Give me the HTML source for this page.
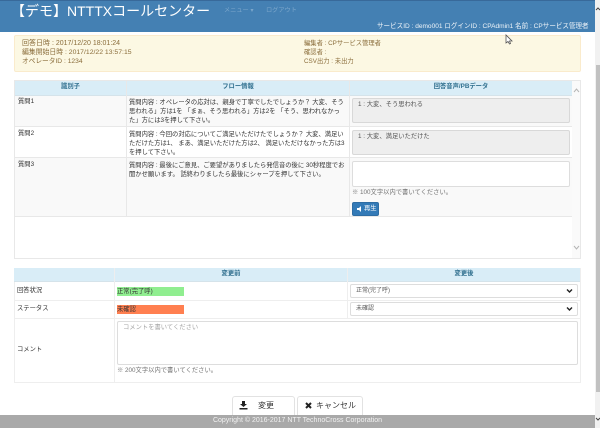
<!DOCTYPE html>
<html lang="ja"><head><meta charset="utf-8"><title>NTTTX</title>
<style>
html,body{margin:0;padding:0;background:#fff;}
body{width:600px;height:428px;position:relative;overflow:hidden;font-family:"Liberation Sans","Noto Sans CJK JP",sans-serif;font-size:6.3px;color:#333;}
.a{position:absolute;box-sizing:border-box;}
.t{position:absolute;white-space:nowrap;line-height:10px;}
.c{text-align:center;}
.th{color:#31708f;font-weight:bold;}
.box{background:#f9f9f9;}
.ta{font-size:6.3px;line-height:9.2px;white-space:nowrap;position:absolute;}
.in{position:absolute;box-sizing:border-box;border:1px solid #ddd;border-radius:2px;}
.al{color:#8a6d3b;}
</style></head><body>

<!-- header -->
<div class="a" style="left:0;top:0;width:595px;height:32px;background:#4480b3;border-top:1px solid #38699a;"></div>
<div class="t" style="left:11px;top:2px;font-size:14px;line-height:18px;color:#fff;">【デモ】NTTTXコールセンター</div>
<div class="t" style="left:224px;top:6px;color:#7ba6cb;font-size:6.2px;">メニュー ▾</div>
<div class="t" style="left:266px;top:6px;color:#7ba6cb;font-size:6.2px;">ログアウト</div>
<div class="t" style="left:377px;top:22px;color:#eef3f8;font-size:6.55px;">サービスID : demo001 ログインID : CPAdmin1 名前 : CPサービス管理者</div>

<!-- scrollbar -->
<div class="a" style="left:595px;top:0;width:5px;height:428px;background:#f1f1f1;"></div>
<div class="a" style="left:596px;top:65px;width:4px;height:327px;background:#c1c1c1;"></div>
<svg class="a" style="left:595px;top:6px" width="5" height="6"><path d="M1 4L3 2L5 4" fill="none" stroke="#444" stroke-width="1"/></svg>
<svg class="a" style="left:595px;top:416px" width="5" height="6"><path d="M1 2L3 4L5 2" fill="none" stroke="#444" stroke-width="1"/></svg>

<!-- alert -->
<div class="a" style="left:14px;top:35px;width:567px;height:37px;background:#fcf8e3;border:1px solid #faebcc;border-radius:2px;"></div>
<div class="t al" style="left:22px;top:38.5px;font-size:7px;">回答日時 : 2017/12/20 18:01:24</div>
<div class="t al" style="left:22px;top:47.5px;font-size:6.85px;">編集開始日時 : 2017/12/22 13:57:15</div>
<div class="t al" style="left:22px;top:56.5px;font-size:6.7px;">オペレータID : 1234</div>
<div class="t al" style="left:304px;top:38.5px;">編集者 : CPサービス管理者</div>
<div class="t al" style="left:304px;top:47.5px;">確認者 :</div>
<div class="t al" style="left:304px;top:56.5px;">CSV出力 : 未出力</div>

<!-- upper table -->
<div class="a" style="left:14px;top:80px;width:567px;height:179px;border:1px solid #e8e8e8;"></div>
<div class="a" style="left:15px;top:81px;width:557px;height:15px;background:#d9edf7;border-bottom:1px solid #d5e3ea;"></div>
<div class="a" style="left:126px;top:81px;width:1px;height:136px;background:#e8e8e8;"></div>
<div class="a" style="left:349px;top:81px;width:1px;height:136px;background:#e8e8e8;"></div>
<div class="t c th" style="left:15px;top:82px;width:111px;">識別子</div>
<div class="t c th" style="left:127px;top:82px;width:222px;">フロー情報</div>
<div class="t c th" style="left:350px;top:82px;width:222px;">回答音声/PBデータ</div>
<div class="a box" style="left:15px;top:96px;width:557px;height:31px;border-bottom:1px solid #e8e8e8;"></div>
<div class="a" style="left:15px;top:127px;width:557px;height:31px;background:#fff;border-bottom:1px solid #e8e8e8;"></div>
<div class="a box" style="left:15px;top:158px;width:557px;height:59px;border-bottom:1px solid #e8e8e8;"></div>
<div class="a" style="left:126px;top:96px;width:1px;height:121px;background:#e8e8e8;"></div>
<div class="a" style="left:349px;top:96px;width:1px;height:121px;background:#e8e8e8;"></div>
<div class="a" style="left:572px;top:81px;width:8px;height:177px;background:#fafafa;"></div>
<svg class="a" style="left:573px;top:87px" width="7" height="6"><path d="M1 5L3.5 2L6 5" fill="none" stroke="#b5b5b5"/></svg>
<svg class="a" style="left:573px;top:245px" width="7" height="6"><path d="M1 1L3.5 4L6 1" fill="none" stroke="#b5b5b5"/></svg>

<div class="t" style="left:18px;top:97px;">質問1</div>
<div class="t" style="left:18px;top:129px;">質問2</div>
<div class="t" style="left:18px;top:160px;">質問3</div>

<div class="ta" style="left:129px;top:97.500px;">質問内容 : オペレータの応対は、親身で丁寧でしたでしょうか？ 大変、そう<br>思われる」方は1を 「まぁ、そう思われる」方は2を 「そう、思われなかっ<br>た」方には3を押して下さい。</div>
<div class="ta" style="left:129px;top:129.500px;">質問内容 : 今回の対応についてご満足いただけたでしょうか？ 大変、満足い<br>ただけた方は1、 まあ、満足いただけた方は2、 満足いただけなかった方は3<br>を押して下さい。</div>
<div class="ta" style="left:129px;top:160.500px;">質問内容 : 最後にご意見、ご要望がありましたら発信音の後に 30秒程度でお<br>聞かせ願います。 話終わりましたら最後にシャープを押して下さい。</div>

<div class="in" style="left:351.500px;top:98px;width:218px;height:25px;background:#eee;border-color:#d8d8d8;"></div>
<div class="t" style="left:358px;top:100px;color:#555;">1 : 大変、そう思われる</div>
<div class="in" style="left:351.500px;top:130px;width:218px;height:25px;background:#eee;border-color:#d8d8d8;"></div>
<div class="t" style="left:358px;top:132px;color:#555;">1 : 大変、満足いただけた</div>
<div class="in" style="left:351.500px;top:161px;width:218px;height:26px;background:#fff;"></div>
<div class="t" style="left:352px;top:187.500px;color:#737373;">※ 100文字以内で書いてください。</div>
<div class="a" style="left:352px;top:202px;width:27px;height:14px;background:#337ab7;border:1px solid #2e6da4;border-radius:2px;"></div>
<svg class="a" style="left:357px;top:206px" width="6" height="6"><path d="M0 2H2L4 0V6L2 4H0Z" fill="#fff"/></svg>
<div class="t" style="left:364px;top:204px;color:#fff;">再生</div>

<!-- lower table -->
<div class="a" style="left:14px;top:268px;width:567px;height:115px;border:1px solid #eee;"></div>
<div class="a" style="left:14px;top:268px;width:566px;height:14px;background:#d9edf7;border-bottom:1px solid #d5e3ea;"></div>
<div class="a" style="left:114px;top:268px;width:1px;height:115px;background:#eee;"></div>
<div class="a" style="left:347px;top:268px;width:1px;height:50px;background:#eee;"></div>
<div class="t c th" style="left:115px;top:269px;width:232px;">変更前</div>
<div class="t c th" style="left:348px;top:269px;width:232px;">変更後</div>
<div class="a" style="left:15px;top:300px;width:565px;height:1px;background:#eee;"></div>
<div class="a" style="left:15px;top:318px;width:565px;height:1px;background:#eee;"></div>

<div class="t" style="left:17px;top:286px;">回答状況</div>
<div class="t" style="left:17px;top:304px;">ステータス</div>
<div class="t" style="left:17px;top:345px;">コメント</div>

<div class="a" style="left:117px;top:287px;width:67px;height:9px;background:#90ee90;"></div>
<div class="t" style="left:117px;top:286.500px;">正常(完了呼)</div>
<div class="a" style="left:117px;top:305px;width:67px;height:9px;background:#ff7f50;"></div>
<div class="t" style="left:117px;top:304.500px;">未確認</div>

<div class="in" style="left:350px;top:284px;width:228px;height:14px;background:#fff;"></div>
<div class="t" style="left:356px;top:286px;color:#555;font-size:6px;">正常(完了呼)</div>
<svg class="a" style="left:566px;top:288px" width="7" height="6"><path d="M1 1.500L3.500 4L6 1.500" fill="none" stroke="#222" stroke-width="1.400"/></svg>
<div class="in" style="left:350px;top:302px;width:228px;height:14px;background:#fff;"></div>
<div class="t" style="left:356px;top:304px;color:#555;font-size:6px;">未確認</div>
<svg class="a" style="left:566px;top:306px" width="7" height="6"><path d="M1 1.500L3.500 4L6 1.500" fill="none" stroke="#222" stroke-width="1.400"/></svg>

<div class="in" style="left:117px;top:321px;width:461px;height:44px;background:#fff;"></div>
<div class="t" style="left:123px;top:323px;color:#a5a5a5;">コメントを書いてください</div>
<div class="t" style="left:117px;top:366px;color:#737373;">※ 200文字以内で書いてください。</div>

<!-- buttons -->
<div class="a" style="left:232px;top:396px;width:63px;height:24px;background:#fff;border:1px solid #e2e2e2;border-radius:3px;"></div>
<svg class="a" style="left:239px;top:401px" width="9" height="9"><path d="M3 0H6V3H8L4.500 6L1 3H3ZM0.500 7H8.500V8.500H0.500Z" fill="#222"/></svg>
<div class="t" style="left:258px;top:401px;font-size:8px;">変更</div>
<div class="a" style="left:297px;top:396px;width:66px;height:24px;background:#fff;border:1px solid #e2e2e2;border-radius:3px;"></div>
<svg class="a" style="left:305px;top:402px" width="8" height="8"><path d="M1 1L6 6M6 1L1 6" fill="none" stroke="#222" stroke-width="2"/></svg>
<div class="t" style="left:316px;top:401px;font-size:8px;">キャンセル</div>

<!-- footer -->
<div class="a" style="left:0;top:415px;width:595px;height:13px;background:#a9a9a9;"></div>
<div class="t c" style="left:0;top:416px;width:595px;color:#f2f2f2;font-size:7px;">Copyright © 2016-2017 NTT TechnoCross Corporation</div>

<!-- cursor -->
<svg class="a" style="left:505px;top:34px" width="8" height="11"><path d="M1 1V9L3 7.500L4.500 10L5.500 9.500L4.500 7H7Z" fill="#fff" stroke="#555" stroke-width=".8"/></svg>
</body></html>
